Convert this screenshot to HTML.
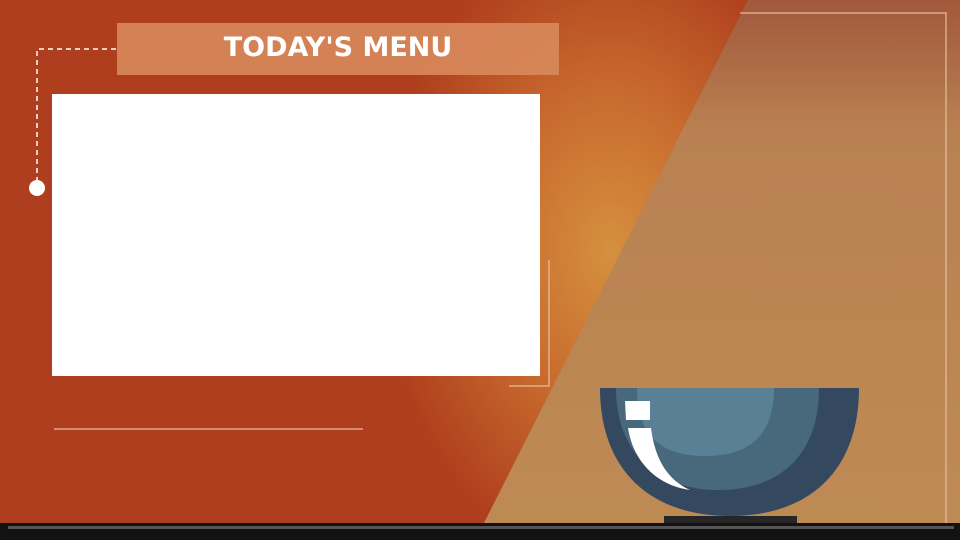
<!DOCTYPE html>
<html><head><style>
body{margin:0;width:960px;height:540px;overflow:hidden;position:relative;font-family:"Liberation Sans",sans-serif;
background:radial-gradient(ellipse 230px 320px at 610px 250px,#d5903e 0%,#c86a2e 50%,#ae3e1d 100%);}
.a{position:absolute}
</style></head><body>
<svg class="a" style="left:0;top:0" width="960" height="540">
<defs>
<linearGradient id="r" x1="0" y1="0" x2="0" y2="1">
<stop offset="0" stop-color="#a2583c"/><stop offset="0.25" stop-color="#b98151"/><stop offset="1" stop-color="#be8a54"/>
</linearGradient>
</defs>
<polygon points="748,0 960,0 960,525 483,525" fill="url(#r)"/>
<polyline points="740,13 946,13 946,525" fill="none" stroke="#e6c0a0" stroke-width="1.5" opacity="0.8"/>
<polyline points="549,260 549,386 509,386" fill="none" stroke="#e8c0a0" stroke-width="1.5" opacity="0.8"/>
<line x1="54" y1="429" x2="363" y2="429" stroke="#e0a890" stroke-width="1.5"/>
<polyline points="116,49 37,49 37,180" fill="none" stroke="#f0d0c0" stroke-width="2" stroke-dasharray="5,4"/>
<circle cx="37" cy="188" r="8" fill="#fff"/>
<rect x="117" y="23" width="442" height="52" fill="#d88a5c" opacity="0.9"/>
<rect x="52" y="94" width="488" height="282" fill="#fff"/>
<path d="M600,388 H859 C859,470 810,516 730,516 C650,516 600,470 600,388Z" fill="#34495f"/>
<path d="M616,388 H819 C819,455 780,490 718,490 C660,490 616,455 616,388Z" fill="#48687c"/>
<path d="M637,388 H774 C774,435 750,456 705,456 C660,456 637,435 637,388Z" fill="#5a8096"/>
<path d="M625,401 H650 V420 H626Z" fill="#fff"/>
<path d="M628,428 H651 C655,460 668,480 690,490 C655,485 633,460 628,428Z" fill="#fff"/>
<rect x="664" y="516" width="133" height="10" fill="#262626"/>
<rect x="0" y="523" width="960" height="17" fill="#121212"/>
<rect x="8" y="526" width="946" height="3" fill="#555"/>
</svg>
<div class="a" style="left:117px;top:23px;width:442px;height:52px;line-height:50px;text-align:center;color:#fff;font-size:27px;font-weight:bold;font-family:'DejaVu Sans',sans-serif;letter-spacing:0px">TODAY'S MENU</div>
</body></html>
